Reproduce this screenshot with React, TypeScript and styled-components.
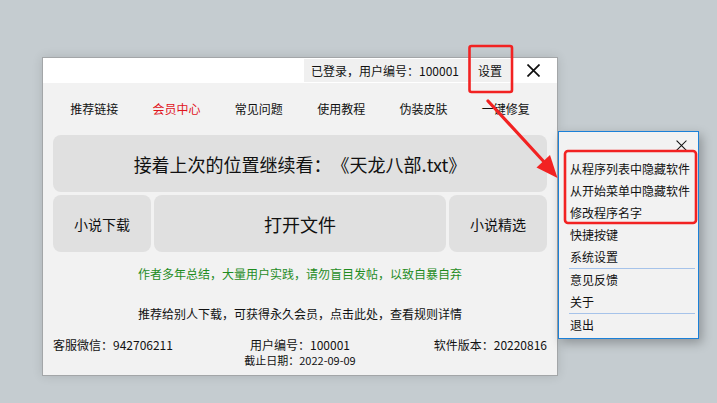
import React from "react";
import styled, { createGlobalStyle } from "styled-components";

const GlobalStyle = createGlobalStyle`
  html, body {
    margin: 0;
    padding: 0;
    background: #c5ccd0;
  }
  body {
    font-family: "Noto Sans CJK SC", "Noto Sans", sans-serif;
    color: #111;
    text-spacing-trim: space-all;
  }
`;

const navItems = [
  { label: "推荐链接" },
  { label: "会员中心", active: true },
  { label: "常见问题" },
  { label: "使用教程" },
  { label: "伪装皮肤" },
  { label: "一键修复" },
];

type MenuEntry = { label: string } | "sep";

const menuEntries: MenuEntry[] = [
  { label: "从程序列表中隐藏软件" },
  { label: "从开始菜单中隐藏软件" },
  { label: "修改程序名字" },
  { label: "快捷按键" },
  { label: "系统设置" },
  "sep",
  { label: "意见反馈" },
  { label: "关于" },
  "sep",
  { label: "退出" },
];

function CloseIcon({ size, weight }: { size: number; weight: number }) {
  return (
    <svg width={size} height={size} viewBox="0 0 12 12">
      <path
        d="M1 1 L11 11 M11 1 L1 11"
        stroke="#111"
        strokeWidth={weight}
        strokeLinecap="square"
        fill="none"
      />
    </svg>
  );
}

export default function App() {
  return (
    <>
      <GlobalStyle />
      <Desktop>
        <Window>
          <TitleBar>
            <Account>
              <span>已登录，用户编号：100001</span>
              <SettingsButton>设置</SettingsButton>
            </Account>
            <CloseButton>
              <CloseIcon size={13} weight={1.6} />
            </CloseButton>
          </TitleBar>

          <Body>
            <Nav>
              {navItems.map((item) => (
                <NavLink key={item.label} $active={item.active}>
                  {item.label}
                </NavLink>
              ))}
            </Nav>

            <ResumeButton>接着上次的位置继续看：《天龙八部.txt》</ResumeButton>

            <ActionRow>
              <ActionButton>小说下载</ActionButton>
              <ActionButton $big>打开文件</ActionButton>
              <ActionButton>小说精选</ActionButton>
            </ActionRow>

            <Notice>作者多年总结，大量用户实践，请勿盲目发帖，以致自暴自弃</Notice>
            <Promo>推荐给别人下载，可获得永久会员，点击此处，查看规则详情</Promo>

            <Footer>
              <FooterCell $align="start">客服微信：942706211</FooterCell>
              <FooterCell $align="center">用户编号：100001</FooterCell>
              <FooterCell $align="end">软件版本：20220816</FooterCell>
            </Footer>
            <Deadline>截止日期：2022-09-09</Deadline>
          </Body>
        </Window>

        <Menu>
          <MenuHeader>
            <CloseIcon size={11} weight={1.1} />
          </MenuHeader>
          {menuEntries.map((entry, i) =>
            entry === "sep" ? (
              <MenuSeparator key={i} />
            ) : (
              <MenuItem key={entry.label}>{entry.label}</MenuItem>
            )
          )}
        </Menu>

        <Annotations width="717" height="403" viewBox="0 0 717 403">
          <rect x="469.5" y="46" width="42.5" height="46" rx="2" fill="none" stroke="#f22222" strokeWidth="2.6" />
          <rect x="565" y="151" width="131" height="72" rx="3" fill="none" stroke="#f22222" strokeWidth="2.6" />
          <path d="M488 101 L546 164" stroke="#f22222" strokeWidth="3.2" strokeLinecap="round" />
          <polygon points="557.5,178 536.5,167.5 550,155" fill="#f22222" />
        </Annotations>
      </Desktop>
    </>
  );
}

const Desktop = styled.div`
  position: relative;
  width: 717px;
  height: 403px;
  overflow: hidden;
  padding: 57px 0 0 42px;
  box-sizing: border-box;
`;

const Window = styled.div`
  width: 516px;
  height: 319px;
  box-sizing: border-box;
  border: 1px solid #a3a6a8;
  background: #f2f2f2;
  display: flex;
  flex-direction: column;
  box-shadow: 0 0 10px rgba(0, 0, 0, 0.12);
`;

const TitleBar = styled.div`
  height: 25px;
  background: #ffffff;
  display: flex;
  justify-content: flex-end;
  align-items: flex-start;
`;

const Account = styled.div`
  margin-top: 1px;
  height: 23px;
  background: #f0f0f0;
  display: flex;
  align-items: center;
  padding-left: 7px;
  font-size: 12px;
  color: #111;
  gap: 11px;
`;

const SettingsButton = styled.div`
  width: 40px;
  text-align: center;
`;

const CloseButton = styled.div`
  width: 47px;
  height: 25px;
  display: flex;
  align-items: center;
  justify-content: center;
`;

const Body = styled.div`
  flex: 1;
  padding: 0 10px;
  display: flex;
  flex-direction: column;
`;

const Nav = styled.div`
  height: 52px;
  display: grid;
  grid-template-columns: repeat(6, 1fr);
  align-items: center;
  padding-bottom: 1px;
  box-sizing: border-box;
`;

const NavLink = styled.div<{ $active?: boolean }>`
  text-align: center;
  font-size: 12px;
  color: ${(p) => (p.$active ? "#e0141c" : "#111")};
`;

const ResumeButton = styled.div`
  height: 57px;
  border-radius: 8px;
  background: #e0e0e0;
  display: flex;
  align-items: center;
  justify-content: center;
  font-size: 18px;
  color: #111;
`;

const ActionRow = styled.div`
  margin-top: 3px;
  display: grid;
  grid-template-columns: 98px 1fr 98px;
  gap: 3px;
`;

const ActionButton = styled.div<{ $big?: boolean }>`
  height: 57px;
  border-radius: 8px;
  background: #e0e0e0;
  display: flex;
  align-items: center;
  justify-content: center;
  font-size: ${(p) => (p.$big ? "18px" : "14px")};
  color: #111;
`;

const Notice = styled.div`
  margin-top: 14px;
  line-height: 16px;
  text-align: center;
  font-size: 12px;
  color: #1f8c1f;
`;

const Promo = styled.div`
  margin-top: 24px;
  line-height: 16px;
  text-align: center;
  font-size: 12px;
  color: #111;
`;

const Footer = styled.div`
  margin-top: 15px;
  line-height: 16px;
  display: grid;
  grid-template-columns: 1fr 1fr 1fr;
  font-size: 12px;
  color: #111;
`;

const FooterCell = styled.div<{ $align: "start" | "center" | "end" }>`
  justify-self: ${(p) => p.$align};
  white-space: nowrap;
`;

const Deadline = styled.div`
  line-height: 14px;
  text-align: center;
  font-size: 11px;
  color: #111;
`;

const Menu = styled.div`
  position: absolute;
  left: 558px;
  top: 131px;
  width: 141px;
  box-sizing: border-box;
  padding-bottom: 2px;
  background: #f2f2f2;
  border: 1px solid #1a80d8;
  box-shadow: 3px 4px 10px rgba(0, 0, 0, 0.28);
  display: flex;
  flex-direction: column;
`;

const MenuHeader = styled.div`
  height: 26px;
  display: flex;
  align-items: center;
  justify-content: flex-end;
  padding-right: 11px;
`;

const MenuItem = styled.div`
  height: 22px;
  line-height: 22px;
  padding-left: 11px;
  font-size: 12px;
  color: #111;
  white-space: nowrap;
`;

const MenuSeparator = styled.div`
  height: 1px;
  margin: 0 3px 0 10px;
  background: #a6c3ea;
`;

const Annotations = styled.svg`
  position: absolute;
  left: 0;
  top: 0;
  pointer-events: none;
`;
